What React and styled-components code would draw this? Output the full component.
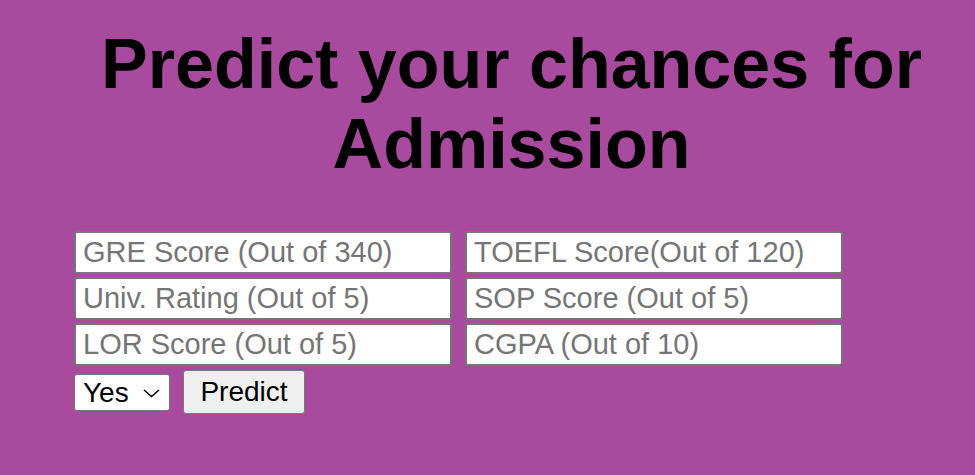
import React, { useState } from "react";
import styled, { createGlobalStyle } from "styled-components";

const GlobalStyle = createGlobalStyle`
  html, body {
    margin: 0;
    padding: 0;
    background: #a84a9e;
    font-family: "Liberation Sans", Arial, sans-serif;
  }
`;

const Page = styled.div`
  min-height: 475px;
  background: #a84a9e;
  padding-top: 24px;
  box-sizing: border-box;
`;

const Title = styled.h1`
  margin: 0;
  padding-left: 48px;
  font-size: 70px;
  font-weight: 700;
  text-align: center;
  color: #000;
`;

const Form = styled.form`
  margin: 47px 0 0 74px;
`;

const Grid = styled.div`
  display: grid;
  grid-template-columns: 378px 378px;
  column-gap: 13px;
  row-gap: 3px;
`;

const Field = styled.input`
  box-sizing: border-box;
  height: 43px;
  width: 100%;
  padding: 0 7px;
  border: 2px solid #767676;
  border-radius: 3px;
  background: #fff;
  font-family: "Liberation Sans", Arial, sans-serif;
  font-size: 29px;
  color: #000;
  outline: none;

  &::placeholder {
    color: #757575;
  }
`;

const Actions = styled.div`
  display: flex;
  align-items: center;
  gap: 13px;
  margin-top: 4px;
`;

const SelectWrap = styled.div`
  position: relative;
  width: 96px;
  height: 37px;
  margin-top: 1px;
`;

const Choice = styled.select`
  box-sizing: border-box;
  appearance: none;
  width: 100%;
  height: 100%;
  padding: 0 0 0 8px;
  border: 1px solid #767676;
  border-radius: 3px;
  background: #fff;
  font-family: "Liberation Sans", Arial, sans-serif;
  font-size: 28px;
  color: #000;
  outline: none;
`;

const Chevron = styled.svg`
  position: absolute;
  right: 10px;
  top: 15px;
  pointer-events: none;
`;

const Submit = styled.button`
  box-sizing: border-box;
  width: 122px;
  height: 44px;
  border: 1px solid #767676;
  border-radius: 3px;
  background: #efefef;
  font-family: "Liberation Sans", Arial, sans-serif;
  font-size: 28px;
  color: #000;
  padding: 0;
`;

const fields = [
  ["gre", "GRE Score (Out of 340)"],
  ["toefl", "TOEFL Score(Out of 120)"],
  ["rating", "Univ. Rating (Out of 5)"],
  ["sop", "SOP Score (Out of 5)"],
  ["lor", "LOR Score (Out of 5)"],
  ["cgpa", "CGPA (Out of 10)"]
];

export default function App() {
  const [research, setResearch] = useState("1");
  return (
    <Page>
      <GlobalStyle />
      <Title>
        Predict your chances for
        <br />
        Admission
      </Title>
      <Form onSubmit={e => e.preventDefault()}>
        <Grid>
          {fields.map(([name, label]) => (
            <Field key={name} name={name} placeholder={label} />
          ))}
        </Grid>
        <Actions>
          <SelectWrap>
            <Choice value={research} onChange={e => setResearch(e.target.value)}>
              <option value="1">Yes</option>
              <option value="0">No</option>
            </Choice>
            <Chevron width="17" height="9" viewBox="0 0 17 9">
              <path d="M1 1 L8.5 7.5 L16 1" fill="none" stroke="#000" strokeWidth="1.6" />
            </Chevron>
          </SelectWrap>
          <Submit type="submit">Predict</Submit>
        </Actions>
      </Form>
    </Page>
  );
}
